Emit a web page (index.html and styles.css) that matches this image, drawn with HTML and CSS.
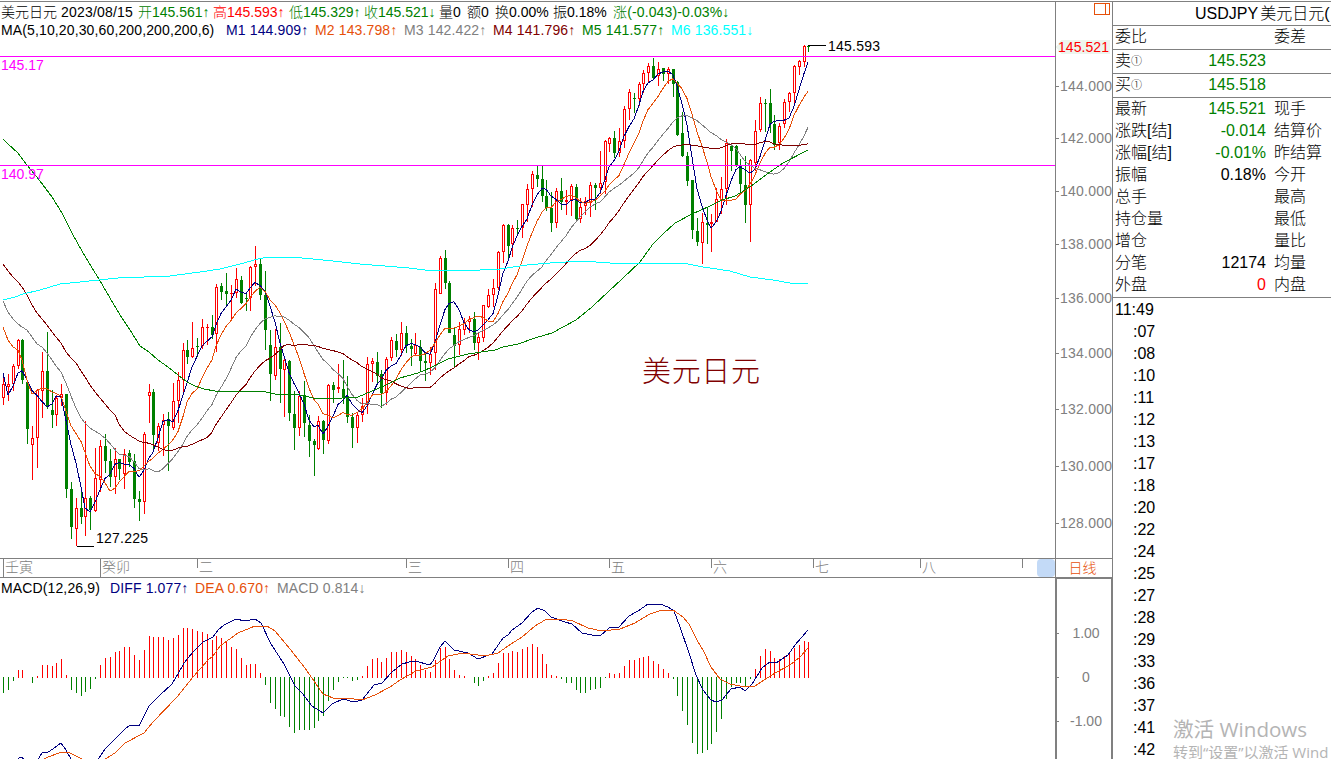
FILE: index.html
```html
<!DOCTYPE html>
<html lang="zh-CN">
<head>
  <meta charset="UTF-8">
  <meta name="viewport" content="width=device-width, initial-scale=1.0">
  <title>USDJPY 美元日元</title>
  <link rel="stylesheet" href="styles.css">
</head>
<body>
  <div class="terminal">
    <div class="charts">
      <div class="pane price-pane">
        <div class="legend">
          <div class="legend-row quote-row">
            <span>美元日元</span>
            <span class="date">2023/08/15</span>
            <span class="down">开145.561↑</span>
            <span class="up">高145.593↑</span>
            <span class="down">低145.329↑</span>
            <span class="down">收145.521↓</span>
            <span>量0</span>
            <span>额0</span>
            <span>换0.00%</span>
            <span>振0.18%</span>
            <span class="down change">涨(-0.043)-0.03%↓</span>
          </div>
          <div class="legend-row ma-row">
            <span class="params">MA(5,10,20,30,60,200,200,200,6)</span>
            <span class="m1">M1 144.909↑</span>
            <span class="m2">M2 143.798↑</span>
            <span class="m3">M3 142.422↑</span>
            <span class="m4">M4 141.796↑</span>
            <span class="m5">M5 141.577↑</span>
            <span class="m6">M6 136.551↓</span>
          </div>
        </div>
        <svg id="price" width="1055" height="556" viewBox="0 2 1055 556">
          <g id="candles"></g>
          <g id="averages"></g>
          <path class="level" d="M0 56.5H1055M0 165.5H1055"/>
          <text class="level-text" x="1" y="70">145.17</text>
          <text class="level-text" x="1" y="179">140.97</text>
          <path class="mark" d="M808 45.5H826M77 546.5H94"/>
          <text x="828" y="51" textLength="52">145.593</text>
          <text x="96" y="543" textLength="52">127.225</text>
          <text class="symbol" x="642" y="382" textLength="118">美元日元</text>
        </svg>
      </div>
      <div class="axis price-axis">
        <svg id="price-axis" width="56" height="556" viewBox="1056 2 56 556">
          <path class="badge" d="M1056 47L1061 40H1110V54H1061Z"/>
          <text class="last" x="1058" y="52" textLength="51">145.521</text>
          <path class="window-icon" d="M1094.5 3.5H1109.5V14.5H1094.5ZM1105.5 3.5V14.5"/>
        </svg>
      </div>
      <div class="time-axis">
        <svg id="time-axis" width="1055" height="18" viewBox="0 559 1055 18">
          <rect class="scroll" x="1037" y="559" width="18" height="18" rx="4"/>
        </svg>
      </div>
      <div class="period">日线</div>
      <div class="pane macd-pane">
        <div class="legend">
          <div class="legend-row macd-row">
            <span>MACD(12,26,9)</span>
            <span class="m1">DIFF 1.077↑</span>
            <span class="m2">DEA 0.670↑</span>
            <span class="m3">MACD 0.814↓</span>
          </div>
        </div>
        <svg id="macd" width="1055" height="181" viewBox="0 578 1055 181"></svg>
      </div>
      <div class="axis macd-axis">
        <svg id="macd-axis" width="53" height="180" viewBox="1057 579 53 180"></svg>
      </div>
    </div>

    <div class="side">
      <div class="name">USDJPY 美元日元(</div>
      <div class="line"><span>委比</span><b></b><span>委差</span></div>
      <div class="line"><span>卖<i>①</i></span><b class="down">145.523</b></div>
      <div class="line"><span>买<i>①</i></span><b class="down">145.518</b></div>
      <div class="quotes">
        <div class="row"><span>最新</span><b class="down">145.521</b><span>现手</span></div>
        <div class="row"><span>涨跌[结]</span><b class="down">-0.014</b><span>结算价</span></div>
        <div class="row"><span>涨幅[结]</span><b class="down">-0.01%</b><span>昨结算</span></div>
        <div class="row"><span>振幅</span><b>0.18%</b><span>今开</span></div>
        <div class="row"><span>总手</span><b></b><span>最高</span></div>
        <div class="row"><span>持仓量</span><b></b><span>最低</span></div>
        <div class="row"><span>增仓</span><b></b><span>量比</span></div>
        <div class="row"><span>分笔</span><b>12174</b><span>均量</span></div>
        <div class="row"><span>外盘</span><b class="up">0</b><span>内盘</span></div>
      </div>
      <ul class="ticks">
        <li class="first">11:49</li>
        <li>:07</li>
        <li>:08</li>
        <li>:10</li>
        <li>:11</li>
        <li>:12</li>
        <li>:13</li>
        <li>:17</li>
        <li>:18</li>
        <li>:20</li>
        <li>:22</li>
        <li>:24</li>
        <li>:25</li>
        <li>:27</li>
        <li>:28</li>
        <li>:29</li>
        <li>:33</li>
        <li>:36</li>
        <li>:37</li>
        <li>:41</li>
        <li>:42</li>
      </ul>
    </div>
  </div>
  <div class="watermark">
    <div class="watermark-title">激活 Windows</div>
    <div class="watermark-text">转到“设置”以激活 Wind</div>
  </div>
  <script src="chart.js"></script>
</body>
</html>
```
FILE: styles.css
```css
body {
  margin: 0;
  overflow: hidden;
  background: #fff;
  color: #000;
  font-family: "Liberation Sans", "Noto Sans CJK SC", sans-serif;
  font-size: 14px;
  font-weight: 300;
}
.terminal {
  display: grid;
  grid-template-columns: 1113px 218px;
  height: 758px;
  margin-top: 1px;
  border-top: 1px solid #808080;
  overflow: hidden;
}
.charts {
  display: grid;
  grid-template-columns: 1055px 58px;
  grid-template-rows: 556px 20px 181px;
}
svg {
  display: block;
}
.pane {
  position: relative;
}
.legend {
  position: absolute;
  top: 0;
  left: 1px;
}
.price-pane .legend {
  top: 1px;
}
.legend-row {
  display: grid;
  height: 18px;
  line-height: 18px;
  white-space: nowrap;
}
.quote-row {
  grid-template-columns: 60px 77px 75px 76px 75px 75px 28px 28px 58px 60px auto;
}
.ma-row {
  grid-template-columns: 225px 89px 89px 89px 89px 89px auto;
}
.macd-row {
  grid-template-columns: 109px 85px 82px auto;
  line-height: 20px;
}
.date {
  letter-spacing: 0.2px;
}
.ma-row,
.macd-row,
.change {
  letter-spacing: 0.13px;
}
.up {
  color: #f00;
}
.down {
  color: #008000;
}
.m1 {
  color: #000080;
}
.m2 {
  color: #e6500a;
}
.m3 {
  color: #808080;
}
.m4 {
  color: #800000;
}
.m5 {
  color: #008000;
}
.m6 {
  color: #0ff;
}
.axis {
  box-sizing: border-box;
  border-left: 1px solid #808080;
  border-right: 1px solid #808080;
}
.macd-axis {
  border: 2px solid #808080;
  border-top-width: 1px;
  border-bottom: 0;
}
.time-axis,
.period {
  box-sizing: border-box;
  border-top: 1px solid #808080;
  border-bottom: 1px solid #808080;
}
.period {
  border-left: 1px solid #808080;
  border-right: 1px solid #808080;
  line-height: 18px;
  text-align: center;
  text-indent: -3px;
  color: #e6500a;
}

/* chart drawing */
svg path,
svg polyline {
  fill: none;
  shape-rendering: crispEdges;
}
.line-m1 {
  stroke: #000080;
}
.line-m2 {
  stroke: #e6500a;
}
.line-m3 {
  stroke: #808080;
}
.line-m4 {
  stroke: #800000;
}
.line-m5 {
  stroke: #008000;
}
.line-m6 {
  stroke: #0ff;
}
.rise {
  stroke: #f00;
}
.fall {
  stroke: #008000;
}
svg .rise-body {
  fill: #fff;
  stroke: #f00;
}
svg .fall-body {
  fill: #008000;
  stroke: #008000;
}
.level {
  stroke: #f0f;
}
.level-text {
  fill: #f0f;
}
.mark {
  stroke: #000;
}
.symbol {
  font-size: 29px;
  fill: #800000;
}
.tick {
  stroke: #808080;
}
.tick-text {
  fill: #808080;
}
svg .badge {
  fill: #eef5ee;
}
.last {
  fill: #f00;
}
.window-icon {
  stroke: #e6500a;
}
.scroll {
  fill: #c3daf7;
}

/* quote panel */
.side {
  font-size: 16px;
  white-space: nowrap;
  overflow: hidden;
}
.name {
  height: 23px;
  line-height: 23px;
  padding-left: 82px;
  word-spacing: -2px;
  border-bottom: 1px solid #808080;
}
.line,
.row {
  display: grid;
  grid-template-columns: 68px 83px auto;
  padding-left: 2px;
}
.line {
  height: 23px;
  line-height: 22px;
  border-bottom: 1px solid #808080;
}
.row {
  height: 22px;
  line-height: 22px;
}
.line b,
.row b {
  font-weight: normal;
  text-align: right;
}
.line span:last-child,
.row span:last-child {
  padding-left: 8px;
}
.line i {
  font-size: 11px;
  font-style: normal;
  vertical-align: 1px;
}
.quotes {
  height: 199px;
  border-bottom: 1px solid #808080;
}
.ticks {
  margin: 0;
  padding: 1px 0 0 20px;
  list-style: none;
}
.ticks li {
  height: 22px;
  line-height: 22px;
}
.ticks .first {
  margin-left: -18px;
}
.watermark {
  position: absolute;
  left: 1173px;
  top: 716px;
  width: 158px;
  color: #b4b4b4;
  font-family: "Open Sans", "Noto Sans CJK SC", sans-serif;
  font-weight: 400;
  white-space: nowrap;
}
.watermark-title {
  font-size: 20.6px;
  line-height: 26px;
}
.watermark-text {
  font-size: 15px;
  line-height: 21px;
}
```
FILE: chart.js
```javascript
// one bar per day: side, high, body top, body bottom, low (screen y)
const bars = `
r 377 384 398 405|r 374 384 387 401|r 364 366 384 391|r 339 340 366 369|g 339 340 380 384
g 380 382 429 444|r 426 438 445 480|r 389 390 438 468|r 352 371 391 418|g 332 371 406 409
g 390 410 415 428|r 395 398 415 426|r 384 394 398 406|g 394 394 489 498|g 482 489 527 539
r 498 508 529 546|g 491 508 517 524|r 421 498 517 536|g 496 498 510 530|r 448 478 511 512
r 440 446 480 492|g 434 446 461 473|g 449 461 477 487|r 448 459 477 494|g 459 459 469 480
r 449 454 474 489|g 450 453 462 467|g 454 461 499 508|g 491 499 502 521|r 432 434 502 514
r 384 392 396 423|g 389 392 435 451|r 423 426 443 451|r 414 420 425 456|g 412 419 426 471
r 383 401 428 430|r 372 380 401 423|r 343 350 380 394|g 340 350 357 364|r 322 348 357 358
g 338 346 347 357|r 319 327 346 349|r 324 327 328 345|g 315 327 335 339|r 284 287 334 352
g 283 286 292 300|g 273 291 294 305|r 285 293 294 319|r 268 279 293 298|g 276 280 303 304
g 294 298 299 311|r 266 267 298 311|r 246 264 267 286|g 259 264 295 300|g 271 295 330 350
g 330 345 374 401|r 329 347 376 380|g 323 347 369 403|r 356 360 370 417|g 360 361 413 421
g 391 414 428 450|r 391 396 428 436|g 381 395 423 437|g 415 425 441 457|g 439 441 445 476
r 416 421 449 450|g 420 421 440 454|r 384 385 441 444|g 382 385 390 403|r 364 387 389 393
g 360 389 398 404|g 376 396 417 423|g 413 417 428 448|r 412 415 428 443|r 398 406 415 422
r 357 364 405 414|r 358 361 364 382|g 352 362 376 384|g 370 374 393 408|r 357 359 393 405
r 337 340 358 361|g 334 341 350 357|r 322 333 350 356|g 326 333 346 353|g 339 346 349 366
r 333 345 354 355|g 340 347 361 371|g 354 361 363 381|r 347 354 363 375|r 283 289 353 370
r 256 258 294 294|g 250 258 283 289|g 281 283 333 333|g 328 335 346 367|r 322 329 345 355
r 318 322 330 335|r 316 319 322 333|g 312 319 343 350|r 333 337 343 360|r 305 305 338 342
r 289 295 307 308|r 279 288 295 307|r 251 252 288 290|r 224 225 252 263|g 224 225 246 259
r 225 228 244 257|g 220 228 229 236|r 204 204 228 238|r 184 189 205 222|r 171 174 189 207
g 166 175 179 187|g 166 179 196 202|g 180 196 208 211|g 192 208 223 232|r 188 191 223 228
g 178 191 202 210|r 190 200 202 215|r 184 186 200 216|g 184 187 219 222|r 198 207 219 223
r 197 201 206 215|r 182 185 203 217|g 183 185 188 210|r 151 183 188 194|r 140 141 182 194
r 137 138 144 152|g 131 138 153 158|r 128 141 153 157|r 106 109 141 148|r 89 92 109 120
g 93 98 99 113|r 82 84 99 106|r 70 73 84 93|r 63 66 73 82|g 58 66 78 80
r 62 69 76 86|g 68 68 74 81|r 67 69 74 84|g 69 69 84 97|g 81 82 135 136
g 112 133 156 157|g 152 156 181 186|g 180 180 230 239|g 218 231 242 246|r 213 222 243 264
g 207 223 225 244|r 214 222 224 252|r 188 199 222 222|r 177 189 200 214|r 139 143 189 205
g 143 146 151 171|g 145 146 166 167|g 159 166 184 192|g 156 185 205 223|r 159 160 205 242
r 120 131 163 171|r 97 103 130 132|g 99 103 104 132|g 89 103 124 133|g 115 124 145 150
r 123 126 143 150|r 99 102 124 128|r 92 93 102 112|r 65 66 93 104|r 60 61 67 75
r 45 46 62 67|g 45 46 47 52`.trim().split(/[|\n]/).map(s => {
  const [side, ...v] = s.split(' ');
  return { side, v: v.map(Number) };
});

// moving average values before enough bars are on screen
const ma5Head = [373, 395, 386, 373];
const ma10Head = [327, 340, 347, 350, 360, 380, 394, 391, 388];
const ma20Head = [301, 312, 319, 324, 327, 330, 337, 344, 347, 353, 360, 366, 372, 383, 396, 408, 418, 423, 428];
const ma30Head = [264, 271, 277, 282, 287, 295, 305, 313, 319, 325, 332, 337, 343, 352, 358, 363, 371, 377, 385,
  392, 398, 404, 410, 415, 424, 431, 435, 438, 441];

const ma60 = '3,139 8,144 18,153 27,165 40,181 52,197 62,213 72,233 82,251 92,268 99,279 110,298 120,315 130,330 140,346 149,352 158,360 168,367 178,375 187,382 195,386 204,389 215,391 262,391 275,394 300,395 313,398 342,398 358,397 372,391 384,386 400,378 418,373 430,368 448,359 468,354 495,350 503,347 518,344 535,338 552,333 576,320 592,307 609,291 622,279 640,262 653,244 663,234 675,223 692,214 710,206 722,200 735,196 750,187 767,174 783,163 808,150';
const ma200 = '3,300 15,297 23,294 40,290 60,284 80,282 118,278 170,276 200,272 220,269 240,264 258,259 268,257 292,257 333,261 360,264 409,268 425,270 460,271 500,269 527,265 550,263 582,261 610,263 683,263 703,267 730,271 750,277 773,280 790,283 808,283';

const hist = [-16, -13, -4, 7, 7, 0, -6, 1, 12, 12, 11, 14, 18, 2, -13, -16, -19, -15, -12, -2,
  12, 19, 20, 25, 26, 30, 30, 22, 17, 27, 41, 40, 40, 40, 37, 39, 42, 49, 49, 48,
  46, 45, 43, 37, 41, 39, 35, 30, 28, 19, 12, 13, 13, 4, -8, -26, -32, -39, -40, -50,
  -56, -53, -53, -53, -51, -44, -39, -24, -13, -5, -1, -1, -4, -3, 1, 11, 18, 19, 15, 19,
  25, 25, 27, 25, 21, 18, 12, 7, 5, 17, 29, 30, 18, 7, 2, 1, 0, -6, -9, -4,
  1, 4, 14, 24, 24, 26, 25, 28, 30, 33, 30, 23, 13, 2, 1, -2, -6, -6, -13, -16,
  -16, -13, -12, -11, -1, 4, 3, 4, 11, 17, 17, 19, 20, 21, 16, 13, 8, 4, -2, -19,
  -34, -48, -66, -77, -76, -73, -67, -55, -42, -22, -10, -6, -6, -10, -2, 8, 21, 28, 26, 19,
  18, 21, 25, 29, 32, 36, 35];
const diff = '17,761 20,757 22,757 25,761 37,761 42,753 48,752 53,749 61,743 66,750 72,761 97,761 105,749 113,741 125,729 130,725 139,726 142,720 149,706 160,695 172,684 178,674 184,663 193,652 203,642 213,637 218,630 224,625 236,619 245,621 255,619 261,623 271,644 284,664 295,686 302,693 312,706 323,713 332,704 343,699 354,702 362,700 374,685 382,683 392,672 402,664 409,662 415,661 430,665 433,661 440,647 445,641 454,650 468,653 478,659 492,654 503,638 508,635 512,630 522,623 532,612 538,608 545,611 551,617 565,622 572,624 582,633 592,635 600,636 609,628 619,627 629,616 638,611 648,604 660,604 668,607 674,611 680,627 688,650 696,675 703,690 711,700 716,702 722,700 731,689 740,687 745,691 752,684 762,668 770,662 776,663 788,655 795,645 802,637 808,630';
const dea = '40,761 48,757 62,752 70,753 86,761 102,761 115,753 125,743 144,733 153,722 177,697 193,677 208,660 213,656 220,646 238,633 255,626 267,626 275,631 290,649 305,668 323,694 333,698 345,698 362,700 375,695 390,687 400,680 416,671 432,667 448,656 463,653 485,656 498,653 508,646 522,637 535,626 545,620 560,619 573,621 588,628 602,631 620,629 635,623 650,614 662,610 673,610 683,617 689,624 697,640 704,652 711,667 720,679 730,684 745,687 755,686 764,680 775,673 790,665 800,657 808,648';

const barX = i => Math.floor(3.49 + 4.852 * i);
const add = (id, html) => document.getElementById(id).insertAdjacentHTML('beforeend', html);
const line = (points, name) => `<polyline class="line-${name}" points="${points}"/>`;

function average(n, head) {
  // a rising bar closes at its top, a falling one at its bottom
  const close = bars.map(b => b.side === 'r' ? b.v[1] : b.v[2]);
  return close.map((c, i) => {
    const y = i < n - 1 ? head[i] : close.slice(i - n + 1, i + 1).reduce((a, b) => a + b) / n;
    return barX(i) + ',' + y.toFixed(1);
  }).join(' ');
}

bars.forEach((b, i) => {
  const x = barX(i) + 0.5;
  const [high, top, bottom, low] = b.v;
  const name = b.side === 'r' ? 'rise' : 'fall';
  const h = Math.max(bottom - top - 1, 0);
  add('candles', `<path class="${name}" d="M${x} ${high}V${low}"/>` +
    (h < 1
      ? `<path class="${name}" d="M${x - 1.5} ${top + 0.5}h3"/>`
      : `<path class="${name}-body" d="M${x - 1} ${top + 0.5}h2v${h}h-2z"/>`));
});

add('averages', line(average(5, ma5Head), 'm1') + line(average(10, ma10Head), 'm2') +
  line(average(20, ma20Head), 'm3') + line(average(30, ma30Head), 'm4') +
  line(ma60, 'm5') + line(ma200, 'm6'));

hist.forEach((v, i) => {
  const x = barX(i) + 0.5;
  if (v) add('macd', `<path class="${v > 0 ? 'rise' : 'fall'}" d="M${x} ${v > 0 ? 678 : 677}V${677 - v}"/>`);
});
add('macd', line(diff, 'm1') + line(dea, 'm2'));

[[86, 144], [138, 142], [191, 140], [244, 138], [298, 136], [353, 134], [409, 132], [466, 130], [523, 128]]
  .forEach(([y, price]) => add('price-axis', `<path class="tick" d="M1056 ${y + 0.5}h3"/>
    <text class="tick-text" x="1060" y="${y + 5}" textLength="52">${price}.000</text>`));

[[633, '1.00'], [677, '0'], [721, '-1.00']]
  .forEach(([y, text]) => add('macd-axis', `<path class="tick" d="M1057 ${y + 0.5}h2"/>
    <text class="tick-text" x="1086" y="${y + 5}" text-anchor="middle">${text}</text>`));

[[3, '壬寅'], [100, '癸卯'], [197, '二'], [406, '三'], [508, '四'], [609, '五'], [711, '六'], [813, '七'], [920, '八'], [1022, '']]
  .forEach(([x, text], i) => add('time-axis', `<path class="tick" d="M${x + 0.5} 559v${i < 2 ? 18 : 9}"/>
    <text class="tick-text" x="${x + 2}" y="572">${text}</text>`));
```
